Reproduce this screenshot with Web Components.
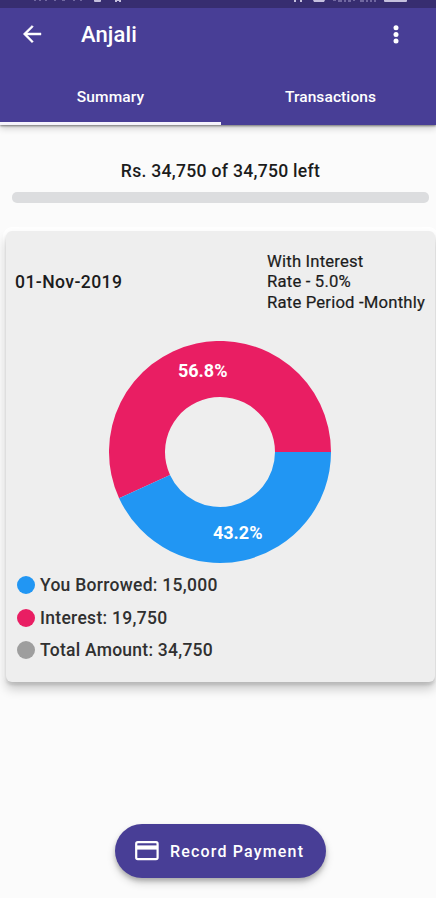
<!DOCTYPE html>
<html lang="en">
<head>
<meta charset="utf-8">
<meta name="viewport" content="width=device-width, initial-scale=1">
<title>Anjali</title>
<style>
    body {
        margin: 0;
        height: 900px;
        overflow: hidden;
        background: #fbfbfb;
        font-family: Roboto, "Liberation Sans", sans-serif;
        color: #1c1c1c;
    }
</style>
</head>
<body>
<loan-page>
    <app-header slot="header" title-text="Anjali">
        <tab-item active>Summary</tab-item>
        <tab-item>Transactions</tab-item>
    </app-header>
    <balance-bar>Rs. 34,750 of 34,750 left</balance-bar>
    <loan-card>
        <span slot="date">01-Nov-2019</span>
        <div slot="terms">With Interest<br>Rate - 5.0%<br>Rate Period -Monthly</div>
        <donut-chart></donut-chart>
        <legend-item color="#2196f3" spacing="0.28px">You Borrowed: 15,000</legend-item>
        <legend-item color="#e91e63" spacing="0.3px">Interest: 19,750</legend-item>
        <legend-item color="#9e9e9e" spacing="0.25px">Total Amount: 34,750</legend-item>
    </loan-card>
    <pay-button slot="action">Record Payment</pay-button>
</loan-page>

<script>
class LoanPage extends HTMLElement{
    constructor(){
        super();
        this.attachShadow({mode: "open"}).innerHTML = `
            <style>
                :host {
                    display: flex;
                    flex-direction: column;
                    height: 898px;
                    border-bottom: 2px solid #fff;
                }
                .action {
                    margin-top: auto;
                    padding-bottom: 20px;
                    display: flex;
                    justify-content: center;
                }
            </style>
            <slot name="header"></slot>
            <slot></slot>
            <div class="action"><slot name="action"></slot></div>
        `;
    }
}

class AppHeader extends HTMLElement{
    constructor(){
        super();
        this.attachShadow({mode: "open"});
    }

    connectedCallback(){
        this.shadowRoot.innerHTML = `
            <style>
                :host {
                    display: block;
                    height: 125px;
                    color: #fff;
                    background: #483e96;
                    box-shadow: 0 1px 2px rgba(0, 0, 0, .45), 0 3px 7px rgba(0, 0, 0, .2);
                }
                .status {
                    display: block;
                    background: #372d70;
                }
                .bar {
                    display: flex;
                    align-items: center;
                    height: 53px;
                    padding: 0 36px 0 20px;
                }
                h1 {
                    flex: 1;
                    margin: 0 0 0 37px;
                    font-size: 22px;
                    font-weight: 500;
                    line-height: 28px;
                    letter-spacing: .1px;
                }
                svg {
                    display: block;
                }
                .tabs {
                    display: flex;
                    height: 64px;
                }
            </style>
            <svg class="status" width="436" height="8">
                <g fill="#7067a0">
                    <path d="M34 0h2v1h-2zM39 0h2v1h-2zM45 0h2v1h-2zM54 0h2v1h-2zM62 0h3v1h-3zM73 0h2v1h-2zM80 0h2v1h-2z"/>
                    <path d="M333 0h3v1h-3zM338 0h4v2h-4zM344 0h2v2h-2zM348 0h3v2h-3zM353 0h2v1h-2zM360 0h4v2h-4zM366 0h2v2h-2zM370 0h2v2h-2zM374 0h2v2h-2z"/>
                </g>
                <g fill="#c5c0de">
                    <path d="M94 0h7v1q0 1-1 1h-5q-1 0-1-1zM115 0h2v2h-2zM119 0h2v2h-2zM116 0h5v1h-5z"/>
                    <path d="M294 0h2v2h-2zM300 0h2v2h-2zM313 0h12l-1 2h-10zM384 0h23v1q0 1-1 1h-21q-1 0-1-1z"/>
                </g>
            </svg>
            <div class="bar">
                <svg width="24" height="24" viewBox="0 0 24 24"><path fill="#fff" stroke="#fff" stroke-width=".4" d="M21 9.9H7.2l6.2-6.1L12 2.4 3.2 11l8.8 8.8 1.4-1.4-6.2-6.3H21z"/></svg>
                <h1>${this.getAttribute("title-text")}</h1>
                <svg width="8" height="24" viewBox="0 0 8 24" fill="#fff"><circle cx="4" cy="4.7" r="2.5"/><circle cx="4" cy="11.4" r="2.5"/><circle cx="4" cy="18.1" r="2.5"/></svg>
            </div>
            <div class="tabs"><slot></slot></div>
        `;
    }
}

class TabItem extends HTMLElement{
    constructor(){
        super();
        this.attachShadow({mode: "open"}).innerHTML = `
            <style>
                :host {
                    flex: 0 0 219px;
                    box-sizing: border-box;
                    height: 64px;
                    padding-top: 26px;
                    text-align: center;
                    font-size: 15.5px;
                    font-weight: 500;
                    line-height: 20px;
                    letter-spacing: .1px;
                }
                :host([active]) {
                    flex-basis: 221px;
                    border-bottom: 3px solid #f5f3fc;
                }
            </style>
            <slot></slot>
        `;
    }
}

class BalanceBar extends HTMLElement{
    constructor(){
        super();
        this.attachShadow({mode: "open"}).innerHTML = `
            <style>
                :host {
                    display: block;
                    box-sizing: border-box;
                    height: 101px;
                    padding: 35px 7px 0 12px;
                    text-align: center;
                    font-size: 17.6px;
                    font-weight: 500;
                    line-height: 22px;
                    letter-spacing: .27px;
                }
                .track {
                    height: 11px;
                    margin-top: 10px;
                    border-radius: 5px;
                    background: #dcdddf;
                }
            </style>
            <slot></slot>
            <div class="track"></div>
        `;
    }
}

class LoanCard extends HTMLElement{
    constructor(){
        super();
        this.attachShadow({mode: "open"}).innerHTML = `
            <style>
                :host {
                    display: block;
                    box-sizing: border-box;
                    height: 451px;
                    margin: 5px 1px 0 6px;
                    padding-top: 20px;
                    border-radius: 6px;
                    background: #eee;
                    box-shadow: 0 3px 3px rgba(0, 0, 0, .12), 0 7px 11px rgba(0, 0, 0, .2), 0 -1px 0 3px #fff;
                }
                .top {
                    display: flex;
                    align-items: center;
                    justify-content: space-between;
                    height: 61px;
                    padding: 0 10px 0 9px;
                }
                .date {
                    font-size: 17.6px;
                    font-weight: 500;
                    letter-spacing: .4px;
                }
                .terms {
                    padding-top: 2px;
                    font-size: 16.7px;
                    line-height: 20.2px;
                    letter-spacing: .18px;
                    white-space: nowrap;
                    -webkit-text-stroke: .2px #1c1c1c;
                }
            </style>
            <div class="top">
                <div class="date"><slot name="date"></slot></div>
                <div class="terms"><slot name="terms"></slot></div>
            </div>
            <slot></slot>
        `;
    }
}

class DonutChart extends HTMLElement{
    constructor(){
        super();
        this.attachShadow({mode: "open"}).innerHTML = `
            <style>
                :host {
                    display: flex;
                    justify-content: center;
                    height: 257px;
                    padding: 29px 1px 0 0;
                    box-sizing: border-box;
                }
                svg {
                    display: block;
                }
                text {
                    fill: #fff;
                    font-size: 18px;
                    font-weight: 700;
                    text-anchor: middle;
                }
            </style>
            <svg width="222" height="222" viewBox="-111 -111 222 222">
                <path fill="#e91e63" d="M-100.9 46.2A111 111 0 1 1 111 0H55A55 55 0 1 0 -50 22.9z"/>
                <path fill="#2196f3" d="M111 0A111 111 0 0 1 -100.9 46.2L-50 22.9A55 55 0 0 0 55 0z"/>
                <text x="-17.3" y="-75">56.8%</text>
                <text x="17.7" y="87">43.2%</text>
            </svg>
        `;
    }
}

class LegendItem extends HTMLElement{
    constructor(){
        super();
        this.attachShadow({mode: "open"});
    }

    connectedCallback(){
        this.shadowRoot.innerHTML = `
            <style>
                :host {
                    display: flex;
                    align-items: center;
                    gap: 5px;
                    height: 32.35px;
                    padding-left: 11px;
                    color: #303030;
                    font-size: 17.5px;
                    font-weight: 500;
                    letter-spacing: ${this.getAttribute("spacing")};
                }
                i {
                    width: 18px;
                    height: 18px;
                    border-radius: 50%;
                    background: ${this.getAttribute("color")};
                }
            </style>
            <i></i><span><slot></slot></span>
        `;
    }
}

class PayButton extends HTMLElement{
    constructor(){
        super();
        this.attachShadow({mode: "open"}).innerHTML = `
            <style>
                button {
                    display: flex;
                    align-items: center;
                    gap: 11px;
                    width: 211px;
                    height: 54px;
                    margin: 0 0 0 5px;
                    padding: 0 0 0 20px;
                    border: 0;
                    border-radius: 27px;
                    background: #483e96;
                    color: #fff;
                    font: 500 16px Roboto, "Liberation Sans", sans-serif;
                    letter-spacing: 1.17px;
                    white-space: nowrap;
                    box-shadow: 0 3px 4px rgba(0, 0, 0, .2), 0 5px 9px rgba(0, 0, 0, .16);
                }
            </style>
            <button type="button">
                <svg width="24" height="20" viewBox="0 0 24 20">
                    <rect x="1.2" y="1.2" width="21.4" height="17" rx="1.6" fill="none" stroke="#fff" stroke-width="2.2"/>
                    <path fill="#fff" d="M1 4.4h22v4.2H1z"/>
                </svg>
                <span><slot></slot></span>
            </button>
        `;
    }
}

customElements.define("loan-page", LoanPage);
customElements.define("app-header", AppHeader);
customElements.define("tab-item", TabItem);
customElements.define("balance-bar", BalanceBar);
customElements.define("loan-card", LoanCard);
customElements.define("donut-chart", DonutChart);
customElements.define("legend-item", LegendItem);
customElements.define("pay-button", PayButton);
</script>
</body>
</html>
